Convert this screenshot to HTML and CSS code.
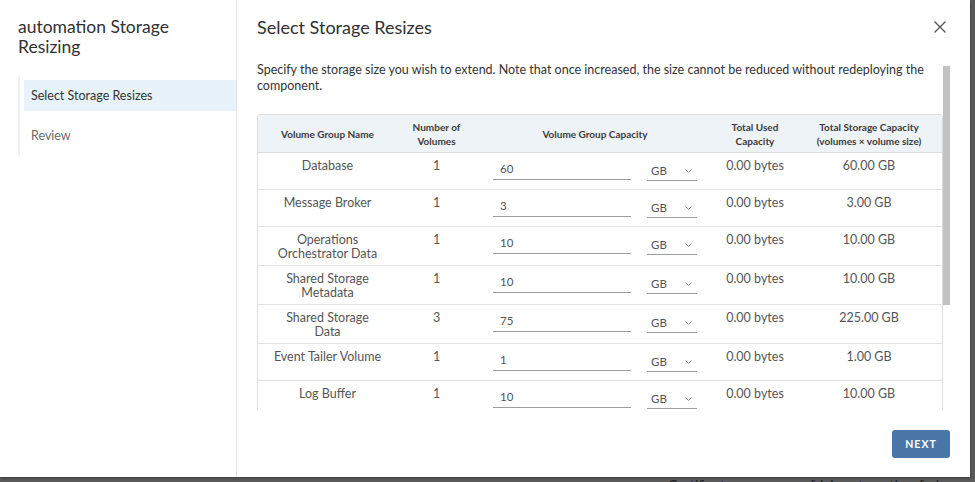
FILE: index.html
```html
<!DOCTYPE html>
<html lang="en">
<head>
<meta charset="utf-8">
<title>automation Storage Resizing</title>
<link rel="stylesheet" href="styles.css">
</head>
<body>
<div class="page">
  <div class="page-row">
    <span class="page-label">Certificate</span>
    <span class="page-value">vcf-lab-automation-fqdn</span>
  </div>
</div>

<div class="modal">
  <aside class="wizard-nav">
    <h2 class="wizard-title">automation Storage Resizing</h2>
    <nav class="steps">
      <div class="step active">Select Storage Resizes</div>
      <div class="step">Review</div>
    </nav>
  </aside>

  <section class="wizard-main">
    <header class="main-header">
      <h3 class="main-title">Select Storage Resizes</h3>
      <button class="close" aria-label="Close">
        <svg width="12" height="12" viewBox="0 0 12 12"><path d="M0.5 0.5 L11.5 11.5 M11.5 0.5 L0.5 11.5" stroke="#555" stroke-width="1.3" fill="none"/></svg>
      </button>
    </header>

    <div class="main-body">
      <div class="viewport">
        <p class="desc">Specify the storage size you wish to extend. Note that once increased, the size cannot be reduced without redeploying the component.</p>

        <table class="grid">
          <colgroup>
            <col class="c-name"><col class="c-num"><col class="c-cap"><col class="c-used"><col class="c-total">
          </colgroup>
          <thead>
            <tr>
              <th>Volume Group Name</th>
              <th>Number of<br>Volumes</th>
              <th>Volume Group Capacity</th>
              <th>Total Used<br>Capacity</th>
              <th>Total Storage Capacity<br>(volumes × volume size)</th>
            </tr>
          </thead>
          <tbody>
            <tr><td>Database</td><td>1</td><td class="cap"><div class="cap-row"><span class="field">60</span><span class="unit">GB<svg width="7" height="4" viewBox="0 0 7 4"><path d="M0.5 0.5 L3.5 3.5 L6.5 0.5" stroke="#8c8c8c" stroke-width="0.9" fill="none"/></svg></span></div></td><td>0.00 bytes</td><td>60.00 GB</td></tr>
            <tr><td>Message Broker</td><td>1</td><td class="cap"><div class="cap-row"><span class="field">3</span><span class="unit">GB<svg width="7" height="4" viewBox="0 0 7 4"><path d="M0.5 0.5 L3.5 3.5 L6.5 0.5" stroke="#8c8c8c" stroke-width="0.9" fill="none"/></svg></span></div></td><td>0.00 bytes</td><td>3.00 GB</td></tr>
            <tr><td>Operations<br>Orchestrator Data</td><td>1</td><td class="cap"><div class="cap-row"><span class="field">10</span><span class="unit">GB<svg width="7" height="4" viewBox="0 0 7 4"><path d="M0.5 0.5 L3.5 3.5 L6.5 0.5" stroke="#8c8c8c" stroke-width="0.9" fill="none"/></svg></span></div></td><td>0.00 bytes</td><td>10.00 GB</td></tr>
            <tr><td>Shared Storage<br>Metadata</td><td>1</td><td class="cap"><div class="cap-row"><span class="field">10</span><span class="unit">GB<svg width="7" height="4" viewBox="0 0 7 4"><path d="M0.5 0.5 L3.5 3.5 L6.5 0.5" stroke="#8c8c8c" stroke-width="0.9" fill="none"/></svg></span></div></td><td>0.00 bytes</td><td>10.00 GB</td></tr>
            <tr><td>Shared Storage<br>Data</td><td>3</td><td class="cap"><div class="cap-row"><span class="field">75</span><span class="unit">GB<svg width="7" height="4" viewBox="0 0 7 4"><path d="M0.5 0.5 L3.5 3.5 L6.5 0.5" stroke="#8c8c8c" stroke-width="0.9" fill="none"/></svg></span></div></td><td>0.00 bytes</td><td>225.00 GB</td></tr>
            <tr><td>Event Tailer Volume</td><td>1</td><td class="cap"><div class="cap-row"><span class="field">1</span><span class="unit">GB<svg width="7" height="4" viewBox="0 0 7 4"><path d="M0.5 0.5 L3.5 3.5 L6.5 0.5" stroke="#8c8c8c" stroke-width="0.9" fill="none"/></svg></span></div></td><td>0.00 bytes</td><td>1.00 GB</td></tr>
            <tr><td>Log Buffer</td><td>1</td><td class="cap"><div class="cap-row"><span class="field">10</span><span class="unit">GB<svg width="7" height="4" viewBox="0 0 7 4"><path d="M0.5 0.5 L3.5 3.5 L6.5 0.5" stroke="#8c8c8c" stroke-width="0.9" fill="none"/></svg></span></div></td><td>0.00 bytes</td><td>10.00 GB</td></tr>
          </tbody>
        </table>
      </div>
      <div class="scrollbar"><div class="thumb"></div></div>
    </div>

    <footer class="main-footer">
      <button class="next">NEXT</button>
    </footer>
  </section>
</div>
</body>
</html>
```

FILE: styles.css
```css
* { box-sizing: border-box; }

html, body {
  margin: 0;
  height: 100%;
}

body {
  background: #5b5b5b;
  font-family: Lato, "Open Sans", Arial, sans-serif;
  color: #333;
  overflow: hidden;
}

.page {
  padding: 477px 0 0 668px;
}

.page-row {
  display: flex;
  gap: 64px;
  font-size: 14px;
  line-height: 16px;
  color: #1e1e1e;
}

.modal {
  position: absolute;
  top: 0;
  left: 0;
  width: 970px;
  height: 477px;
  background: #fff;
  display: flex;
  box-shadow: 0 1px 3px rgba(0,0,0,0.35);
}

/* left wizard navigation */
.wizard-nav {
  width: 237px;
  flex: none;
  border-right: 1px solid #e3e3e3;
  padding: 17px 0 0 18px;
}

.wizard-title {
  margin: 0;
  padding-right: 24px;
  font-size: 17.5px;
  line-height: 20px;
  font-weight: 400;
  color: #313131;
}

.steps {
  margin-top: 19px;
  border-left: 2px solid #eeeeee;
  padding: 4px 0 5px 4px;
  display: flex;
  flex-direction: column;
  gap: 9px;
}

.step {
  height: 31px;
  line-height: 31px;
  padding-left: 7px;
  font-size: 12.5px;
  color: #6a6a6a;
}

.step.active {
  background: #e7f2fb;
  color: #333;
}

/* main area */
.wizard-main {
  flex: 1;
  min-width: 0;
  display: flex;
  flex-direction: column;
  padding: 0 20px;
}

.main-header {
  height: 62px;
  flex: none;
  display: flex;
  align-items: flex-start;
  justify-content: space-between;
  padding-top: 16px;
}

.main-title {
  margin: 0;
  font-size: 18px;
  line-height: 22px;
  font-weight: 400;
  color: #2f2f2f;
}

.close {
  width: 20px;
  height: 20px;
  margin-top: 1px;
  padding: 0;
  border: 0;
  background: none;
  display: flex;
  align-items: center;
  justify-content: center;
}

.main-body {
  flex: 1;
  min-height: 0;
  display: flex;
}

.viewport {
  flex: 1;
  min-width: 0;
  overflow: hidden;
}

.scrollbar {
  width: 7px;
  flex: none;
  padding-top: 4px;
}

.thumb {
  height: 239px;
  background: #c2c2c2;
}

.desc {
  margin: 0 0 20px;
  font-size: 12.5px;
  line-height: 16px;
  color: #333;
}

.grid {
  width: 686px;
  table-layout: fixed;
  border-collapse: separate;
  border-spacing: 0;
  border: 1px solid #dcdcdc;
  border-radius: 3px 3px 0 0;
}

.c-name { width: 139px; }
.c-num { width: 79px; }
.c-cap { width: 238px; }
.c-used { width: 82px; }
.c-total { width: 146px; }

.grid th {
  background: #eef3f7;
  font-size: 10px;
  line-height: 14px;
  font-weight: 700;
  color: #3a3a3a;
  text-align: center;
  vertical-align: middle;
  height: 38px;
  padding: 0 2px;
  border-bottom: 1px solid #dcdcdc;
}

.grid td {
  font-size: 12.5px;
  line-height: 14px;
  color: #555;
  text-align: center;
  vertical-align: top;
  padding: 6px 4px 4px;
  height: 37px;
  border-bottom: 1px solid #e3e3e3;
}

.grid td.cap {
  padding: 6px 17px 0;
}

.cap-row {
  display: flex;
  gap: 16px;
}

.field {
  flex: 1;
  height: 21px;
  line-height: 20px;
  padding-left: 7px;
  text-align: left;
  font-size: 11.5px;
  border-bottom: 1px solid #9d9d9d;
}

.unit {
  width: 50px;
  flex: none;
  height: 22px;
  padding: 2px 5px 0 4px;
  display: flex;
  align-items: center;
  justify-content: space-between;
  font-size: 11.5px;
  border-bottom: 1px solid #9d9d9d;
}

.main-footer {
  flex: none;
  display: flex;
  justify-content: flex-end;
  padding: 20px 0 19px;
}

.next {
  width: 58px;
  height: 28px;
  border: 0;
  border-radius: 3px;
  background: #4a76a7;
  color: #fff;
  font-family: Lato, "Open Sans", Arial, sans-serif;
  font-size: 10.5px;
  font-weight: 700;
  letter-spacing: 1px;
}
```
